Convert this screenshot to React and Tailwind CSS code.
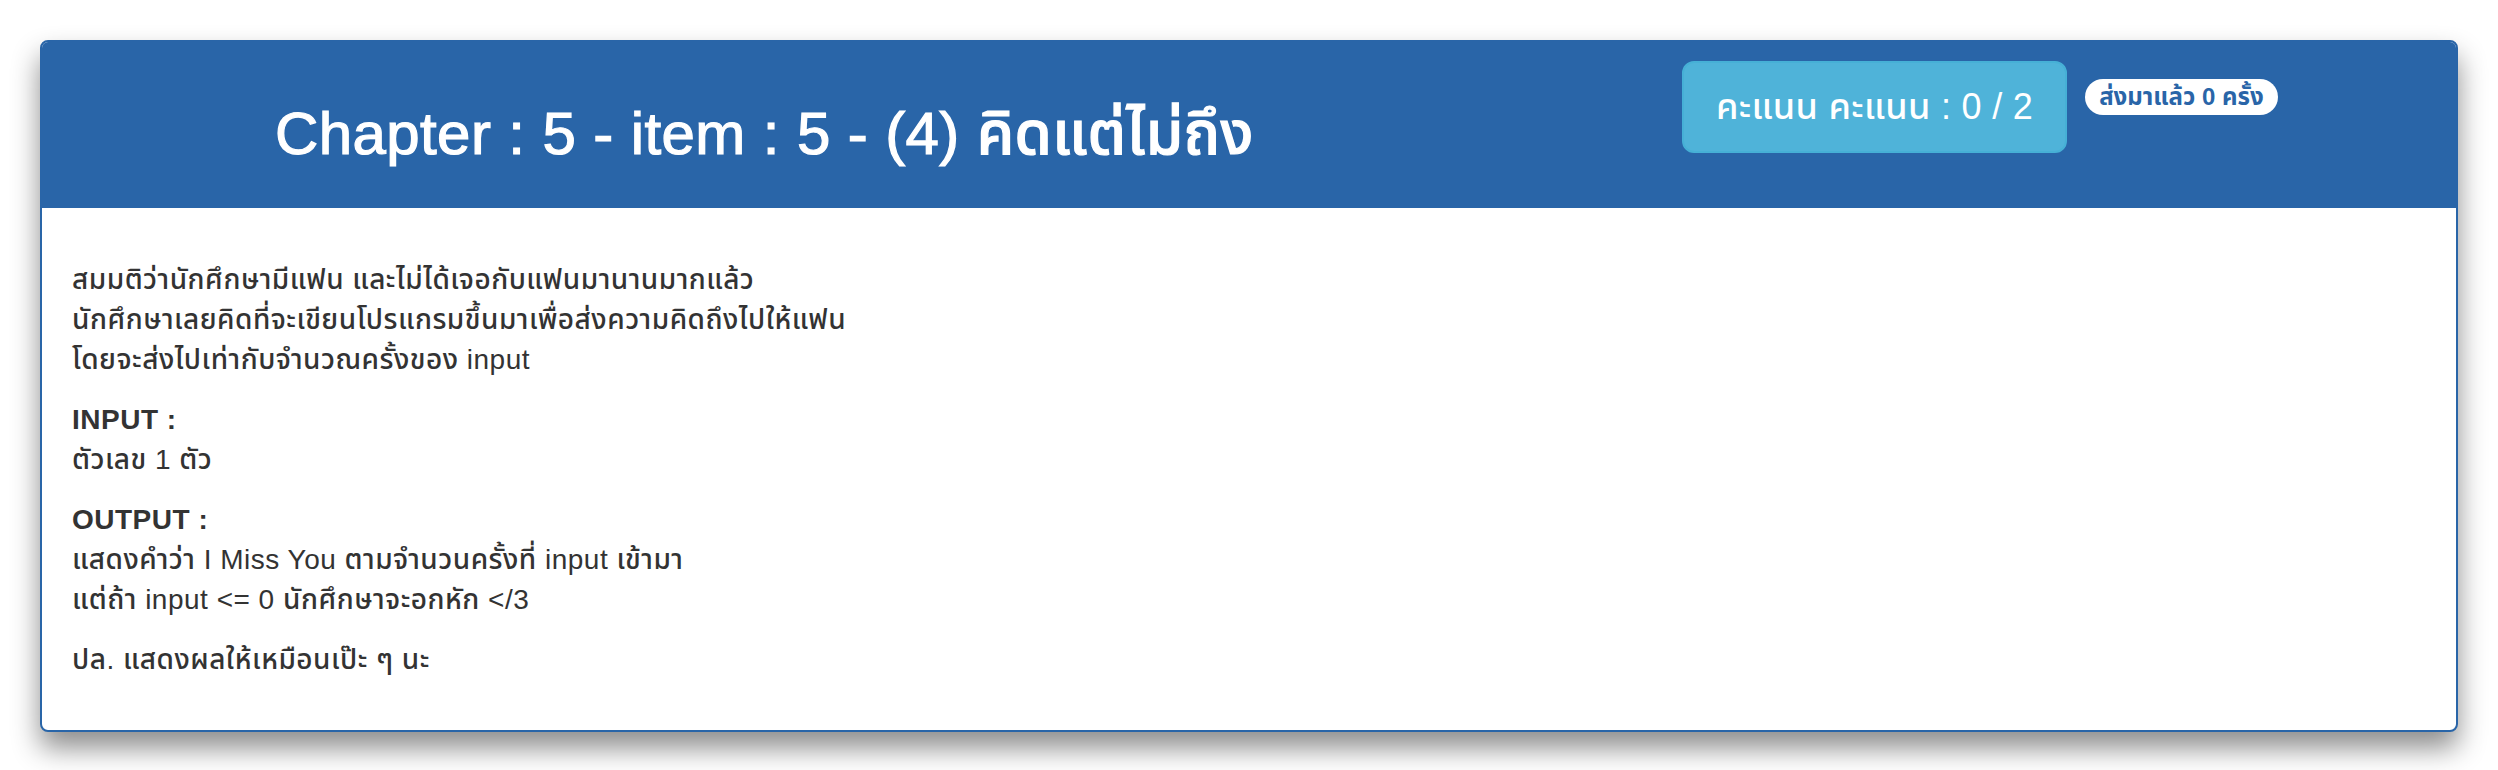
import React from 'react';

// Problem card: header with title, score button and submission badge; body with the task text.

const font = "font-['Liberation_Sans','Noto_Sans_Thai','Noto_Sans','DejaVu_Sans',sans-serif]";

const App = () => {
    return (
        <div className={`min-h-screen bg-white px-[40px] pt-[40px] pb-[42px] ${font}`}>
            <div className="rounded-[8px] border-2 border-[#2965a8] bg-white shadow-[0_16px_28px_rgba(0,0,0,0.45)] overflow-hidden">
                {/* Header */}
                <div className="flex h-[166px] bg-[#2965a8]">
                    <div className="w-[1640px] shrink-0 pl-[233px]">
                        <h2 className="mt-[59px] text-[60px] leading-[66px] font-medium tracking-[0.4px] text-white whitespace-nowrap [-webkit-text-stroke:1.2px_white]">
                            Chapter : 5 - item : 5 - (4) คิดแต่ไม่ถึง
                        </h2>
                    </div>
                    <div className="flex items-start gap-[18px] pt-[19px]">
                        <button className="rounded-[12px] border-2 border-[#46b0d6] bg-[#4fb3d9] px-[32px] py-[20px] text-[36px] leading-[48px] font-medium tracking-[0.3px] text-white whitespace-nowrap">
                            คะแนน คะแนน : 0 / 2
                        </button>
                        <span className="mt-[18px] rounded-[20px] bg-white px-[14px] py-[6px] text-[24px] leading-[24px] font-bold text-[#2965a8] whitespace-nowrap">
                            ส่งมาแล้ว 0 ครั้ง
                        </span>
                    </div>
                </div>

                {/* Body */}
                <div className="px-[30px] pt-[52px] pb-[30px] text-[28px] leading-[40px] font-medium tracking-[0.5px] text-[#333333]">
                    <p className="mb-[20px]">
                        สมมติว่านักศึกษามีแฟน และไม่ได้เจอกับแฟนมานานมากแล้ว<br />
                        นักศึกษาเลยคิดที่จะเขียนโปรแกรมขึ้นมาเพื่อส่งความคิดถึงไปให้แฟน<br />
                        โดยจะส่งไปเท่ากับจำนวณครั้งของ input
                    </p>
                    <p className="mb-[20px]">
                        <strong className="font-bold">INPUT :</strong><br />
                        ตัวเลข 1 ตัว
                    </p>
                    <p className="mb-[20px]">
                        <strong className="font-bold">OUTPUT :</strong><br />
                        แสดงคำว่า I Miss You ตามจำนวนครั้งที่ input เข้ามา<br />
                        แต่ถ้า input &lt;= 0 นักศึกษาจะอกหัก &lt;/3
                    </p>
                    <p className="mb-[20px]">ปล. แสดงผลให้เหมือนเป๊ะ ๆ นะ</p>
                </div>
            </div>
        </div>
    );
};

export default App;
